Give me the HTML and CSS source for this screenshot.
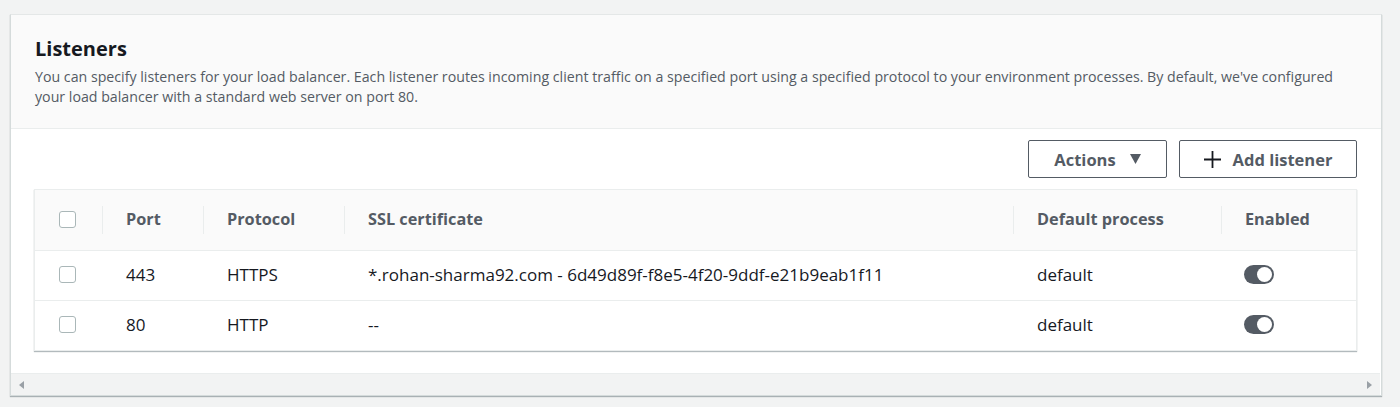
FILE: index.html
```html
<!DOCTYPE html>
<html>
<head>
<meta charset="utf-8">
<link rel="stylesheet" href="styles.css">
</head>
<body>
<div class="card">
  <div class="card-header">
    <h2 class="title">Listeners</h2>
    <p class="desc">You can specify listeners for your load balancer. Each listener routes incoming client traffic on a specified port using a specified protocol to your environment processes. By default, we've configured your load balancer with a standard web server on port 80.</p>
  </div>
  <div class="card-body">
    <div class="toolbar">
      <button class="btn btn-actions">Actions <span class="caret"><svg width="11" height="10" viewBox="0 0 11 10"><path d="M0 0 L11 0 L5.5 10 Z" fill="#545b64"/></svg></span></button>
      <button class="btn btn-add"><svg class="plus" width="17" height="17" viewBox="0 0 17 17"><path d="M8.5 0 V17 M0 8.5 H17" stroke="#16191f" stroke-width="1.8"/></svg>Add listener</button>
    </div>
    <div class="table">
      <div class="row head">
        <div class="cell c-check"><span class="checkbox"></span></div>
        <div class="cell c-port"><span class="sep"></span>Port</div>
        <div class="cell c-proto"><span class="sep"></span>Protocol</div>
        <div class="cell c-ssl"><span class="sep"></span>SSL certificate</div>
        <div class="cell c-proc"><span class="sep"></span>Default process</div>
        <div class="cell c-en"><span class="sep"></span>Enabled</div>
      </div>
      <div class="row">
        <div class="cell c-check"><span class="checkbox"></span></div>
        <div class="cell c-port">443</div>
        <div class="cell c-proto">HTTPS</div>
        <div class="cell c-ssl">*.rohan-sharma92.com - 6d49d89f-f8e5-4f20-9ddf-e21b9eab1f11</div>
        <div class="cell c-proc">default</div>
        <div class="cell c-en"><span class="toggle"><span class="knob"></span></span></div>
      </div>
      <div class="row">
        <div class="cell c-check"><span class="checkbox"></span></div>
        <div class="cell c-port">80</div>
        <div class="cell c-proto">HTTP</div>
        <div class="cell c-ssl">--</div>
        <div class="cell c-proc">default</div>
        <div class="cell c-en"><span class="toggle"><span class="knob"></span></span></div>
      </div>
    </div>
    <div class="scrollbar">
      <svg width="5" height="8" viewBox="0 0 5 8"><path d="M5 0 L0 4 L5 8 Z" fill="#9aa0a6"/></svg>
      <svg width="5" height="8" viewBox="0 0 5 8"><path d="M0 0 L5 4 L0 8 Z" fill="#9aa0a6"/></svg>
    </div>
  </div>
</div>
</body>
</html>
```

FILE: styles.css
```css
* { box-sizing: border-box; }
html, body { margin: 0; padding: 0; }
body {
  background: #f2f3f3;
  font-family: "Open Sans", "Noto Sans", sans-serif;
  color: #16191f;
  width: 1400px;
  height: 407px;
  overflow: hidden;
  padding: 14px 18px 0 10px;
}
.card {
  background: #ffffff;
  border: 1px solid #d5dbdb;
  border-top-color: #e4e7e7;
  box-shadow: 0 1px 1px rgba(0,28,36,0.3);
  height: 382px;
}
.card-header {
  background: #fafafa;
  border-bottom: 1px solid #eaeded;
  padding: 20px 24px 0 24px;
  height: 114px;
}
.title {
  margin: 0;
  font-size: 20px;
  font-weight: 700;
  line-height: 28px;
  color: #16191f;
}
.desc {
  margin: 4px 0 0 0;
  font-size: 14.2px;
  line-height: 20px;
  color: #545b64;
  padding-right: 0;
}
.card-body {
  padding: 11px 24px 0 23px;
}
.toolbar {
  display: flex;
  justify-content: flex-end;
  gap: 12px;
  height: 38px;
  margin-bottom: 11px;
}
.btn {
  height: 38px;
  border: 1px solid #545b64;
  border-radius: 2px;
  background: #ffffff;
  font-family: inherit;
  font-size: 16.5px;
  font-weight: 700;
  color: #545b64;
  display: flex;
  align-items: center;
  justify-content: center;
  padding: 0;
}
.btn-actions { width: 139px; }
.btn-add { width: 178px; }
.caret { margin-left: 14px; display: flex; }
.plus { margin-right: 12px; }
.table {
  border: 1px solid #eaeded;
  box-shadow: 0 1px 1px rgba(0,28,36,0.3);
  background: #fff;
}
.row {
  display: grid;
  grid-template-columns: 67px 101px 141px 669px 208px 1fr;
  height: 50px;
  border-top: 1px solid #eaeded;
  align-items: center;
  font-size: 17px;
}
.row.head {
  border-top: none;
  height: 60px;
  background: #fafafa;
  font-weight: 700;
  color: #545b64;
  font-size: 16.3px;
}
.cell {
  position: relative;
  padding-left: 24px;
  white-space: nowrap;
  height: 100%;
  display: flex;
  align-items: center;
  padding-bottom: 2px;
}
.sep {
  position: absolute;
  left: 0;
  top: 16px;
  height: 28px;
  border-left: 1px solid #eaeded;
}
.checkbox {
  display: inline-block;
  width: 17px;
  height: 17px;
  border: 1px solid #aab7b8;
  border-radius: 3px;
  background: #fff;
}
.toggle {
  display: inline-block;
  width: 30px;
  height: 19px;
  border-radius: 10px;
  background: #545b64;
  position: relative;
  margin-left: -1px;
}
.knob {
  position: absolute;
  right: 2px;
  top: 2px;
  width: 15px;
  height: 15px;
  border-radius: 50%;
  background: #fff;
}
.scrollbar {
  margin: 22px -23px 0 -23px;
  height: 22px;
  background: #f2f3f3;
  border-top: 1px solid #eaeded;
  display: flex;
  justify-content: space-between;
  align-items: center;
  padding: 0 8px 0 8px;
}
```
